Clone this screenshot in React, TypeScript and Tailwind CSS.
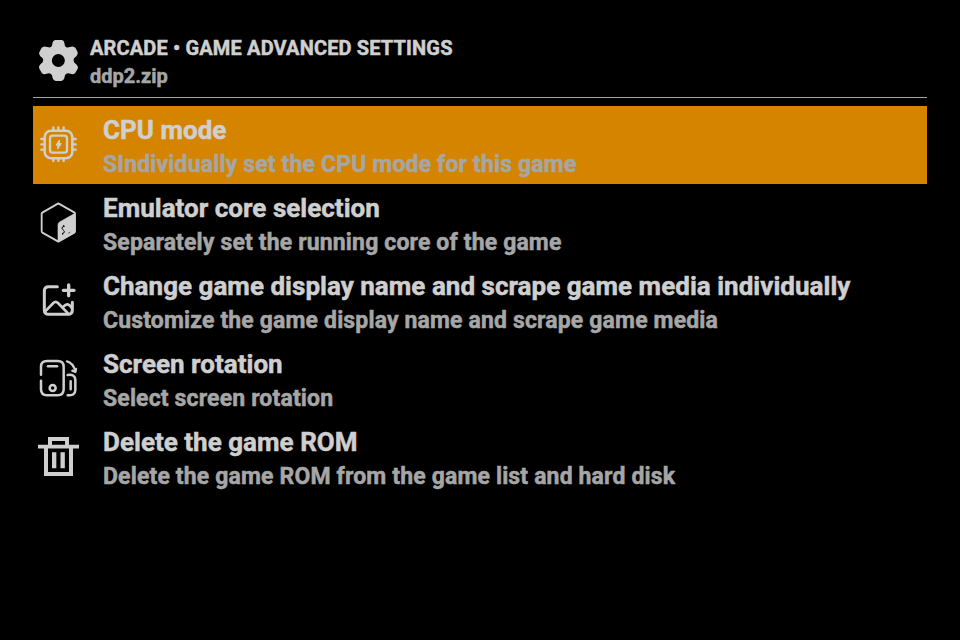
import type { ReactNode } from "react";

interface SettingItem {
  title: string;
  description: string;
  icon: ReactNode;
}

const CpuIcon = () => (
  <svg viewBox="12 18 144 144" className="w-12 h-12" fill="none" stroke="currentColor" strokeLinecap="round" strokeLinejoin="round">
    <rect x="44" y="47" width="83" height="83" rx="19" strokeWidth="7.5" />
    <rect x="60" y="62" width="51" height="51" rx="8" strokeWidth="7" />
    <path
      d="M70 46V37M85 46V37M101 46V37M70 131v7M85 131v7M101 131v7M43 72H34M43 88H34M43 104H34M128 72h9M128 88h9M128 104h9"
      strokeWidth="7"
    />
    <path d="M88 76 79 90h6l-2 11 10-15h-6Z" fill="currentColor" strokeWidth="4" />
  </svg>
);

const CoreIcon = () => (
  <svg viewBox="12 18 144 144" className="w-12 h-12" fill="none" stroke="currentColor" strokeLinejoin="round">
    <path d="M85 31 134 59Q135 60 135 62V115Q135 118 133 119L85 146 37 119Q35 118 35 115V62Q35 60 37 59Z" strokeWidth="5.5" />
    <path d="M135 61 89 87Q84 90 84 95V145L133 118Q135 117 135 114Z" fill="currentColor" strokeWidth="2" />
    <path d="M104 100q-8 0-8 6c0 4 7 5 7 10q0 5-7 6M101 96v4M98 121v4" className="stroke-black" strokeWidth="3" />
    <path d="M114 121l7-4" className="stroke-black" strokeWidth="1.5" />
  </svg>
);

const ImageIcon = () => (
  <svg viewBox="12 18 144 144" className="w-12 h-12" fill="none" stroke="currentColor" strokeLinecap="round" strokeLinejoin="round" strokeWidth="9">
    <path d="M82 47H56Q43 47 43 60V117Q43 130 56 130H114Q127 130 127 117V94" />
    <path d="M45 122 70 96Q77 89 84 96L114 127M101 106q12-14 24 4" strokeWidth="8" />
    <path d="M116 42v32M100 58h32" strokeWidth="10" />
  </svg>
);

const RotateIcon = () => (
  <svg viewBox="12 18 144 144" className="w-12 h-12" fill="none" stroke="currentColor" strokeLinecap="round" strokeWidth="7.5">
    <path d="M33 77V53Q33 36 51 36H83Q101 36 101 53V121Q101 139 83 139H51Q33 139 33 121V95" />
    <path d="M54 52h27" />
    <circle cx="68" cy="117" r="9" />
    <path d="M111 37q17 4 25 28" strokeWidth="7" />
    <path d="M127 65 136 69 138 60" strokeWidth="7" strokeLinejoin="round" />
    <path d="M113 78q23-3 23 15v30q0 17-23 16M122 97v24" />
  </svg>
);

const TrashIcon = () => (
  <svg viewBox="12 18 144 144" className="w-12 h-12" fill="none" stroke="currentColor">
    <path d="M24 59H147" strokeWidth="11" />
    <path d="M60 59V36H111V59" strokeWidth="12" />
    <path d="M48 60V141H123V60" strokeWidth="12" />
    <path d="M72.5 76V124M98 76V124" strokeWidth="13" />
  </svg>
);

const GearIcon = () => (
  <svg viewBox="12 18 144 144" className="w-12 h-12" fill="currentColor">
    <path
      fillRule="evenodd"
      d="M76 30H95Q102 31 103 38L105 48Q109 54 116 52L124 50Q132 48 137 55L143 67Q145 74 139 79L132 85Q129 91 132 97L140 104Q146 110 143 116L136 128Q131 134 124 132L115 130Q107 130 105 136L103 145Q101 152 94 153H77Q70 152 68 145L66 136Q63 130 56 130L47 132Q40 134 35 128L28 116Q25 109 30 104L38 97Q42 91 38 85L31 79Q25 74 28 67L34 55Q39 48 47 50L56 52Q63 53 66 47L68 37Q70 31 76 30ZM85 72a19.5 19.5 0 1 0 0 39a19.5 19.5 0 1 0 0-39Z"
    />
  </svg>
);

const items: SettingItem[] = [
  {
    title: "CPU mode",
    description: "SIndividually set the CPU mode for this game",
    icon: <CpuIcon />,
  },
  {
    title: "Emulator core selection",
    description: "Separately set the running core of the game",
    icon: <CoreIcon />,
  },
  {
    title: "Change game display name and scrape game media individually",
    description: "Customize the game display name and scrape game media",
    icon: <ImageIcon />,
  },
  {
    title: "Screen rotation",
    description: "Select screen rotation",
    icon: <RotateIcon />,
  },
  {
    title: "Delete the game ROM",
    description: "Delete the game ROM from the game list and hard disk",
    icon: <TrashIcon />,
  },
];

const selected = 0;

export default function App() {
  return (
    <div className="w-[960px] h-[640px] overflow-hidden bg-black px-[33px] pt-[34px] font-['Roboto',sans-serif] font-bold text-[#cfcfcf] whitespace-nowrap [-webkit-text-stroke:0.5px_currentColor]">
      {/* Header */}
      <header className="flex h-16 border-b border-[#a5a5a5] pl-px">
        <div className="pt-0.5">
          <GearIcon />
        </div>
        <div className="pl-2">
          <h1 className="text-[20px] leading-7 tracking-[0.15px]">ARCADE • GAME ADVANCED SETTINGS</h1>
          <p className="text-[20px] leading-7 text-[#a6a6a6]">ddp2.zip</p>
        </div>
      </header>

      {/* Settings list */}
      <ul className="mt-2">
        {items.map((item, index) => (
          <li
            key={item.title}
            className={`flex h-[78px] pl-px ${index === selected ? "bg-[#d58400]" : ""}`}
          >
            <div className="pt-[15px]">{item.icon}</div>
            <div className="pl-[21px] pt-[7px]">
              <h2 className="text-[26px] leading-[34px] tracking-[0.02px]">{item.title}</h2>
              <p className="text-[23px] leading-9 tracking-[0.15px] text-[#a6a6a6]">{item.description}</p>
            </div>
          </li>
        ))}
      </ul>
    </div>
  );
}
